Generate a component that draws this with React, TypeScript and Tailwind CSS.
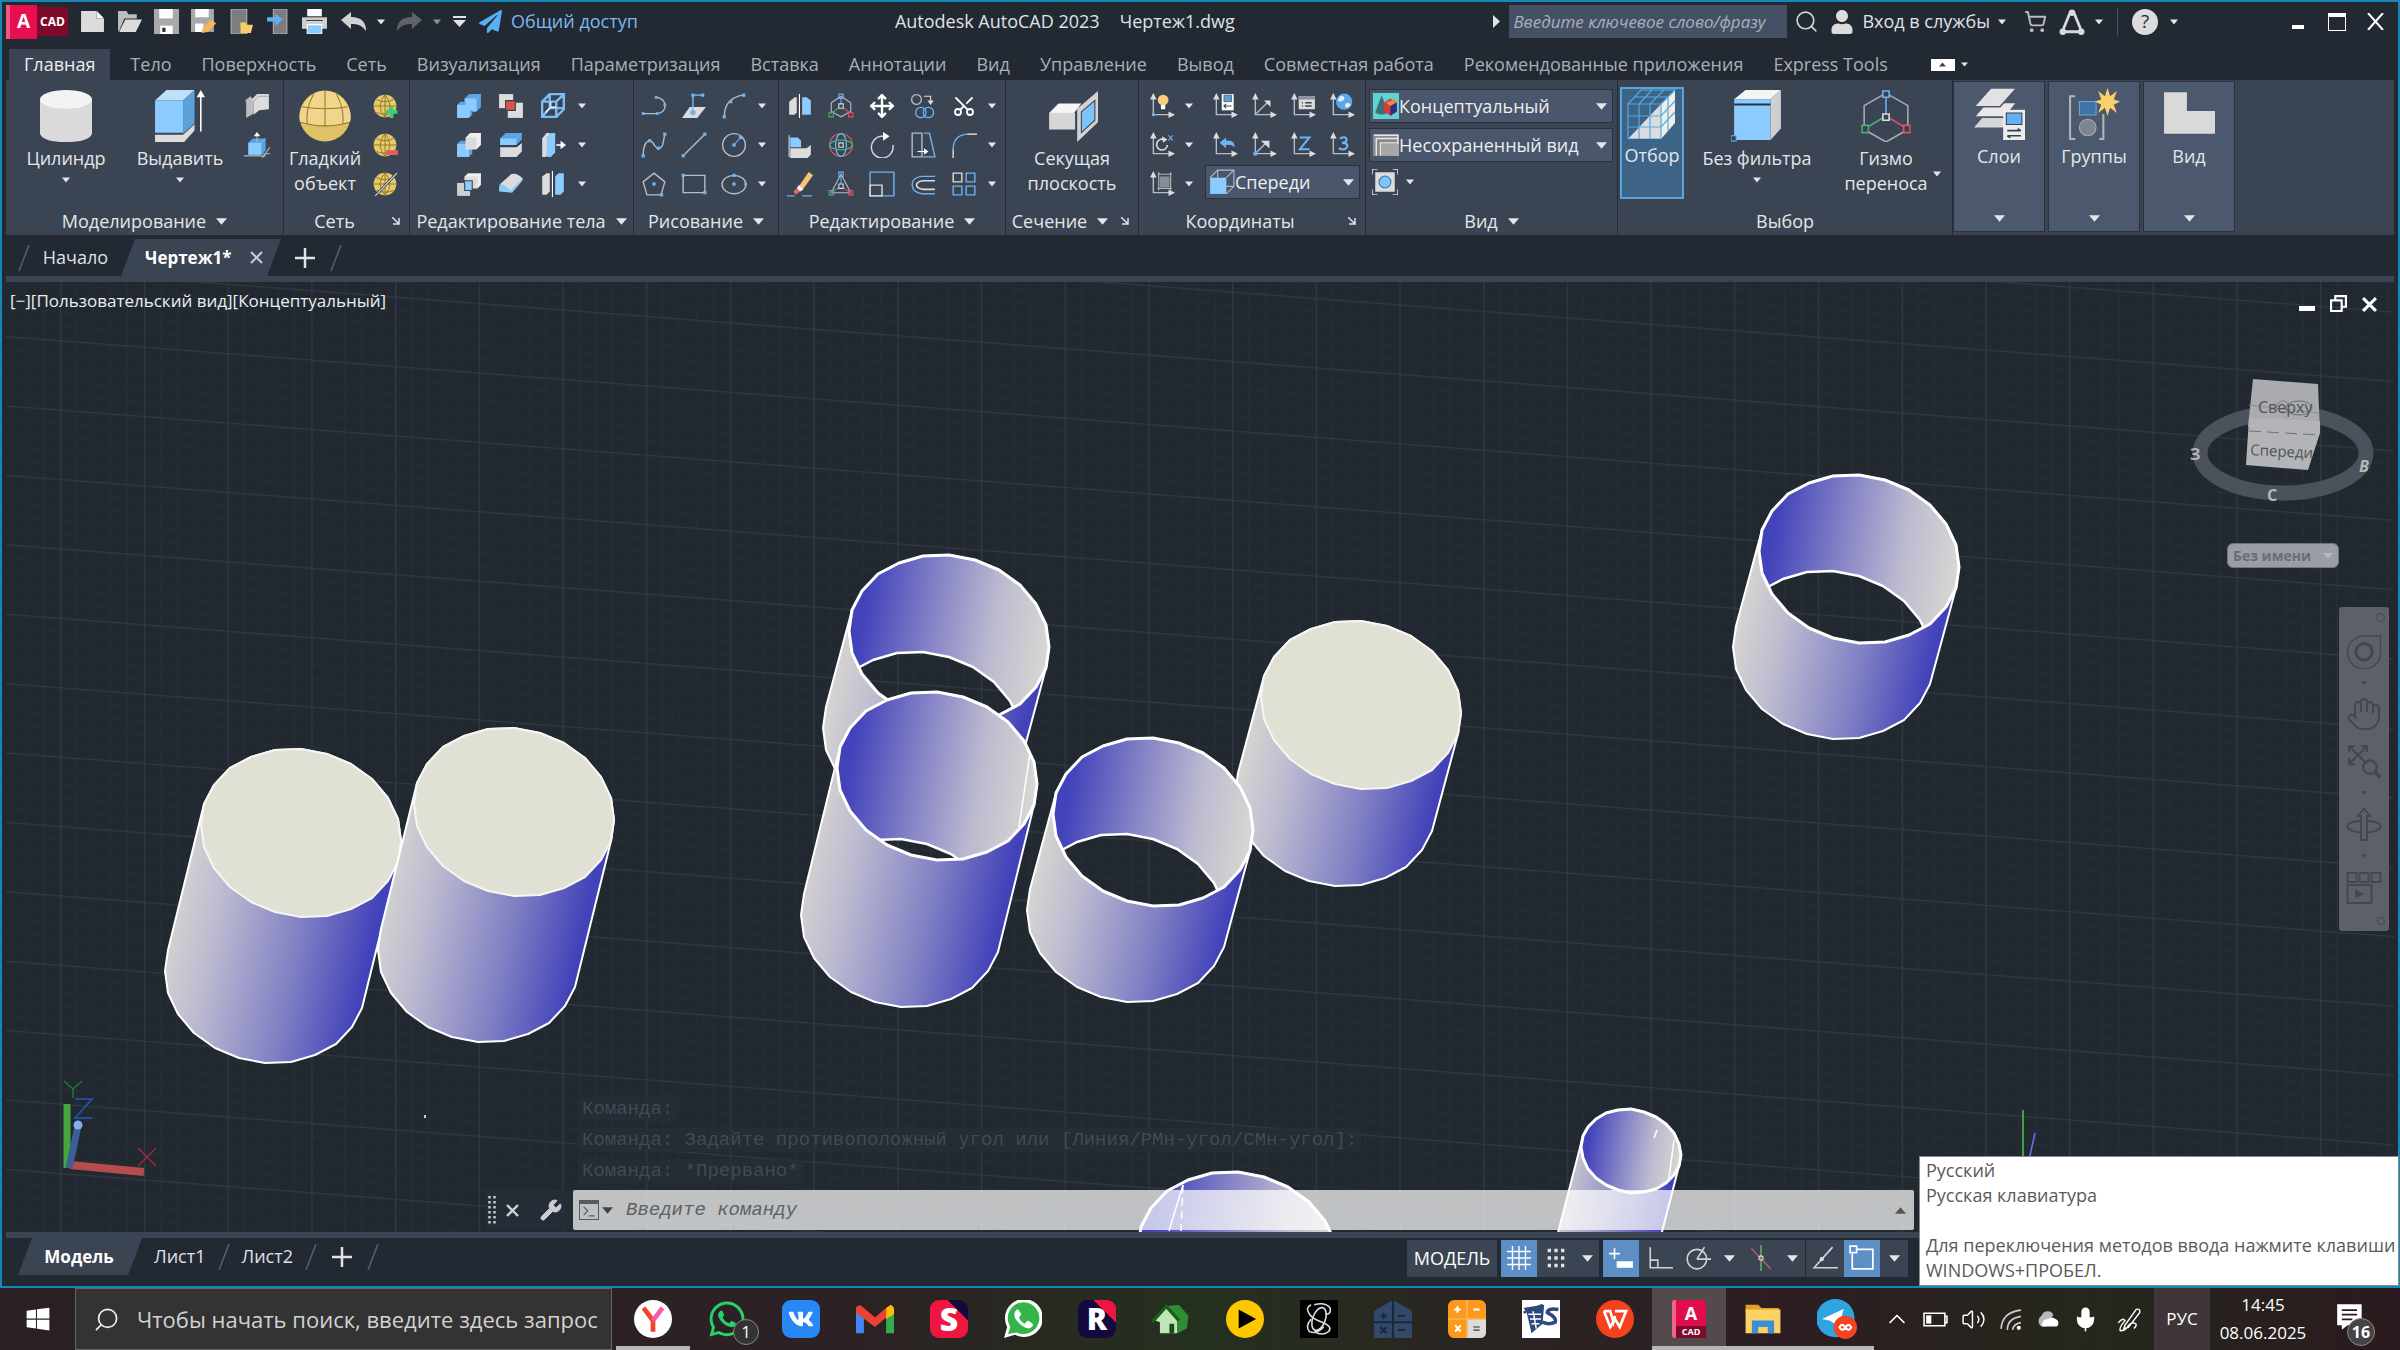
import type { ReactNode } from "react";
import { useState } from "react";
import {
  Search, Move, Scissors, Wrench, ShoppingCart, Mic, ChevronUp, Hand, Terminal, Volume2,
} from "lucide-react";
import { FaWhatsapp, FaVk, FaUser, FaPaperPlane, FaWindows } from "react-icons/fa";

const LIGHT = "#dcdcdc";
const BLUE = "#8ccbff";
const LINE = "#b4bcc8";

/* ── Small shared pieces ─────────────────────────────────────────────── */
function Svg({ size = 26, box = 24, children }: { size?: number; box?: number; children: ReactNode }) {
  return (
    <svg width={size} height={size} viewBox={`0 0 ${box} ${box}`} fill="none" className="shrink-0" aria-hidden="true">
      {children}
    </svg>
  );
}

function Caret({ w = 8, up = false, fill = "#e4e6e9" }: { w?: number; up?: boolean; fill?: string }) {
  return (
    <svg width={w} height={w} viewBox="0 0 10 10" className="shrink-0" aria-hidden="true">
      <path d={up ? "M0 8L5 2L10 8Z" : "M0 2H10L5 8Z"} fill={fill} />
    </svg>
  );
}

function Nodes({ at, s = 2.6, fill = "#6db3f2" }: { at: number[][]; s?: number; fill?: string }) {
  return (
    <>
      {at.map(([x, y], i) => (
        <rect key={i} x={x - s / 2} y={y - s / 2} width={s} height={s} fill={fill} />
      ))}
    </>
  );
}

function Axes() {
  return (
    <>
      <path d="M4 4V20H20" stroke={LINE} strokeWidth="1.3" />
      <path d="M1 6L4 0L7 6ZM18 17L24 20L18 23Z" fill={LIGHT} />
    </>
  );
}

/* a solid block with a lighter top and side */
function Block({ x, y, w, h, front = BLUE, side = "#5aa3e0", d = 5 }: {
  x: number; y: number; w: number; h: number; front?: string; side?: string; d?: number;
}) {
  return (
    <>
      <path d={`M${x} ${y}l${d} ${-d}h${w}v${h}l${-d} ${d}h${-w}z`} fill={side} />
      <path d={`M${x} ${y}h${w}v${h}h${-w}z`} fill={front} />
      <path d={`M${x + w} ${y}l${d} ${-d}`} stroke="#fff" strokeOpacity=".4" strokeWidth=".6" />
    </>
  );
}

function Ball({ children }: { children?: ReactNode }) {
  return (
    <Svg>
      <circle cx="12" cy="12" r="10.5" fill="#e6c96a" />
      <path d="M12 1.500V22.500M1.500 12H22.500M4 6Q12 10 20 6M4 18Q12 21 20 18M12 1.500Q3 12 12 22.500M12 1.500Q21 12 12 22.500" stroke="#8a7026" strokeWidth=".8" />
      {children}
    </Svg>
  );
}

const icons: Record<string, ReactNode> = {
  polysolid: <Svg><path d="M1 7L6 3L9 7V19L2 23V8Z" fill="#bdbdbd" /><path d="M7 6L12 1H23V15L14 16L9 20V8Z" fill={LIGHT} /><path d="M9 8L13 3H23" stroke="#a0a0a0" strokeWidth=".8" /></Svg>,
  presspull: <Svg><Block x={4} y={10} w={12} h={11} d={4} /><path d="M12 10V3M0 22H20M17 24L24 14M17 20L24 20" stroke="#aeb7c3" /><path d="M9 4L12 0L15 4Z" fill="#fff" /></Svg>,
  meshPlus: <Ball><path d="M18 12V23M12.500 17.500H23.500" stroke="#3fce77" strokeWidth="3.500" /></Ball>,
  meshMinus: <Ball><path d="M13 19H24" stroke="#e35d5d" strokeWidth="4.500" /></Ball>,
  meshCrease: <Ball><path d="M3 23L23 2" stroke="#39414e" strokeWidth="2.500" /><path d="M3 23L23 2" stroke={LIGHT} /></Ball>,
  union: <Svg><Block x={8} y={5} w={11} h={12} d={4} /><Block x={1} y={11} w={11} h={12} d={3} /><path d="M9 6H18V16H13V22H9Z" fill={BLUE} /></Svg>,
  interfere: <Svg><path d="M1 1H14V14H1Z" fill={LIGHT} /><path d="M9 9H23V23H9Z" fill={LIGHT} /><path d="M7 7H16V16H7Z" fill="#d9534f" stroke="#39414e" /></Svg>,
  edges: <Svg><path d="M2 8H15V22H2ZM2 8L9 1H22V15L15 22M22 1L15 8M9 1V14L2 22M9 14H22" stroke="#7cbdf5" strokeWidth="2.200" /><path d="M5 18L10 13M10 13V8M10 13H15" stroke="#fff" /></Svg>,
  subtract: <Svg><Block x={1} y={11} w={11} h={12} d={3} /><Block x={9} y={5} w={10} h={11} front={LIGHT} side="#efefef" d={4} /></Svg>,
  slice: <Svg><Block x={2} y={6} w={15} h={6} d={5} /><path d="M2 14H17L22 10V18L17 23H2Z" fill={LIGHT} /><path d="M2 13H17L23 8" stroke="#39414e" strokeWidth="1.500" /></Svg>,
  thicken: <Svg><path d="M2 6L6 1H9V19L5 23H2Z" fill={LIGHT} /><path d="M6 5L10 1H14V19L10 23H6Z" fill={BLUE} /><path d="M15 12H21" stroke="#fff" strokeWidth="1.500" /><path d="M19 8L24 12L19 16Z" fill="#fff" /></Svg>,
  intersect: <Svg><Block x={8} y={5} w={12} h={11} front={LIGHT} side="#efefef" d={3} /><path d="M1 11H13V23H1Z" fill="#d0d0d0" /><path d="M8 9H15V18H8Z" fill={BLUE} stroke="#39414e" /></Svg>,
  fillet3d: <Svg><path d="M1 14L13 3L23 8L20 12L13 20L1 19Z" fill={BLUE} /><path d="M1 13L12 3Q17 1 23 7L11 18Q6 11 1 13Z" fill={LIGHT} /></Svg>,
  mirrorSolid: <Svg><path d="M2 5L6 2H9V19L6 22H2Z" fill={LIGHT} /><path d="M14 5L17 2H22V19L19 22H14Z" fill={BLUE} /><path d="M11.500 0V24" stroke="#fff" /></Svg>,
  polyline: <Svg><path d="M2 19H15Q23 18 22 10Q21 5 14 4" stroke={LINE} strokeWidth="1.300" /><Nodes at={[[2, 19], [15, 19], [14, 4], [22, 11]]} /></Svg>,
  plane: <Svg><path d="M1 23L8 13H23L15 23Z" fill={LIGHT} /><path d="M11 18V2H20" stroke="#7cbdf5" strokeWidth="1.300" /><circle cx="11" cy="18" r="2.500" fill="#6db3f2" /><Nodes at={[[11, 2], [20, 2]]} s={3} /></Svg>,
  arc: <Svg><path d="M3 22Q3 5 20 2" stroke={LINE} strokeWidth="1.300" /><Nodes at={[[3, 22], [9, 8], [21, 2]]} s={3} /></Svg>,
  spline: <Svg><path d="M2 22Q2 9 8 8Q11 9 13 13Q17 18 20 12L22 2" stroke={LINE} strokeWidth="1.300" /><Nodes at={[[2, 22], [8, 8], [16, 15], [22, 2]]} s={3} /></Svg>,
  line: <Svg><path d="M2 22L22 2" stroke={LINE} strokeWidth="1.300" /><Nodes at={[[2, 22], [22, 2]]} s={3} /></Svg>,
  circle: <Svg><circle cx="12" cy="12" r="10.500" stroke={LINE} strokeWidth="1.300" /><path d="M12 12L18 5" stroke="#6db3f2" /><Nodes at={[[12, 12], [18, 5]]} s={3} /></Svg>,
  polygon: <Svg><path d="M12 2L22 10L18.500 22H5.500L2 10Z" stroke={LINE} strokeWidth="1.300" /><Nodes at={[[12, 12], [19, 22]]} s={3} /></Svg>,
  rect: <Svg><path d="M2 4H22V20H2Z" stroke={LINE} strokeWidth="1.300" /><Nodes at={[[2, 4], [22, 20]]} s={3} /></Svg>,
  ellipse: <Svg><ellipse cx="12" cy="12.500" rx="11" ry="8.500" stroke={LINE} strokeWidth="1.300" /><Nodes at={[[12, 4], [12, 12], [23, 12]]} s={3} /></Svg>,
  mirror3d: <Svg><path d="M2 8L7 4H9V18L7 20H2Z" fill={LIGHT} /><path d="M14 4H18L22 7V20H14Z" fill={BLUE} /><path d="M11.500 1V23" stroke="#fff" /></Svg>,
  gizmoMove: <Svg><path d="M12 3L21 9V17L12 22L3 17V9Z" stroke={LINE} /><path d="M12 3V12" stroke="#6db3f2" /><path d="M12 12L3 19" stroke="#4fae72" /><path d="M12 12L21 19" stroke="#c9566b" /><path d="M10 1H14V5H10Z" stroke="#6db3f2" /><path d="M1 18H5V22H1Z" stroke="#4fae72" /><path d="M19 18H23V22H19Z" stroke="#e0526a" /><path d="M10 10H14V14H10Z" stroke="#ddd" fill="#39414e" /></Svg>,
  move: <Move size={26} color="#fff" strokeWidth={2.2} />,
  copy: <Svg><circle cx="6" cy="6" r="4.500" stroke={LINE} strokeWidth="1.200" /><circle cx="10" cy="18" r="4.800" stroke="#6db3f2" strokeWidth="1.200" /><circle cx="17" cy="18" r="4.800" stroke="#6db3f2" strokeWidth="1.200" /><path d="M13 3H19V8" stroke="#ddd" /><path d="M16 7H22L19 11Z" fill="#ddd" /></Svg>,
  trim: <span className="relative flex"><Scissors size={24} color="#fff" strokeWidth={1.800} className="-rotate-90" /></span>,
  align: <Svg><path d="M2 3V23" stroke={LINE} strokeWidth="1.300" /><path d="M3 5H10L13 8V14H3Z" fill={BLUE} /><path d="M3 15H18L22 12V21L19 24H3Z" fill={LIGHT} /></Svg>,
  gizmoRotate: <Svg><circle cx="12" cy="12" r="10.500" stroke="#c9566b" strokeWidth="1.200" /><ellipse cx="12" cy="12" rx="5" ry="10.500" stroke="#6db3f2" strokeWidth="1.200" /><ellipse cx="12" cy="12" rx="10.500" ry="4.500" stroke="#4fae72" strokeWidth="1.200" /><path d="M10 10H14V14H10Z" stroke="#ddd" /></Svg>,
  rotate: <Svg><path d="M22 12A10 10 0 1 1 12 4H15" stroke="#d2d6dc" strokeWidth="1.400" /><path d="M13 0L19 4L13 8Z" fill="#fff" /></Svg>,
  stretch: <Svg><path d="M2 1H11V23H2Z" stroke={LINE} strokeWidth="1.300" /><path d="M13 1H18L23 23H12" stroke="#6db3f2" strokeWidth="1.300" /><path d="M7 18H14" stroke="#fff" /><path d="M13 15L17 18L13 21Z" fill="#fff" /></Svg>,
  fillet: <Svg><path d="M2 24V16" stroke="#ddd" strokeWidth="1.300" /><path d="M2 16Q2 3 15 2" stroke="#6db3f2" strokeWidth="1.300" /><path d="M15 2H24" stroke="#ddd" strokeWidth="1.300" /></Svg>,
  erase: <Svg><path d="M11 14L20 1L24 4L14 18Z" fill="#f7c672" /><path d="M9 16L11 13L15 17L12 19Z" fill="#fff" /><path d="M6 19L9 16L12 19L8 22Z" fill="#f0645f" /><path d="M0 23H7M14 23H23" stroke="#6db3f2" strokeWidth="1.300" /></Svg>,
  gizmoScale: <Svg><path d="M12 3L3 20H21Z" stroke={LINE} /><path d="M12 3V14" stroke="#6db3f2" /><path d="M12 14L3 20" stroke="#4fae72" /><path d="M12 14L21 20" stroke="#c9566b" /><path d="M10 1H14V5H10Z" stroke="#6db3f2" /><path d="M1 18H5V22H1Z" stroke="#4fae72" /><path d="M19 18H23V22H19Z" stroke="#e0526a" /><path d="M10 12H14V16H10Z" stroke="#ddd" fill="#39414e" /></Svg>,
  scale: <Svg><path d="M1 1H23V23H1Z" stroke="#6db3f2" strokeWidth="1.300" /><path d="M1 13H12V23H1Z" stroke="#ddd" strokeWidth="1.300" /></Svg>,
  offset: <Svg><path d="M23 5H11Q2 6 2 12.500Q2 20 11 21H23" stroke="#6db3f2" strokeWidth="1.300" /><path d="M23 9H12Q6 10 6 13Q6 16 12 17H23" stroke="#ddd" strokeWidth="1.500" /></Svg>,
  array: <Svg><path d="M2 2H10V10H2Z" stroke="#ddd" strokeWidth="1.300" /><path d="M14 2H22V10H14ZM2 14H10V22H2ZM14 14H22V22H14Z" stroke="#6db3f2" strokeWidth="1.300" /></Svg>,
  ucsIcon: <Svg><Axes /><circle cx="13" cy="6.500" r="5" fill="#f8ce7c" /><path d="M11 11H15V15H11Z" fill="#fff" /><circle cx="4" cy="20" r="1.500" fill="#6db3f2" /></Svg>,
  ucsX: <Svg><Axes /><path d="M14 7A5 5 0 1 0 17 12" stroke="#ddd" strokeWidth="1.500" /><path d="M12 4L17 7L13 10Z" fill="#ddd" /><path d="M18 3L22 8M22 3L18 8" stroke="#6db3f2" /></Svg>,
  ucsObject: <Svg><Axes /><path d="M10 5H19V15H10Z" fill="#858d98" /><path d="M8 3H21M8 16H21M9 1V18M20 1V18" stroke="#b8b8b8" /></Svg>,
  ucsNamed: <Svg><Axes /><path d="M9 1H20V16H9Z" fill="#fff" /><path d="M11 2H18V8H11Z" fill="#5d9fdc" stroke="#39414e" strokeWidth=".6" /><path d="M11 12H18M13 10L11 12L13 14" stroke="#39414e" /></Svg>,
  ucsWorldAxis: <Svg><Axes /><path d="M5 19L15 9" stroke={LINE} strokeWidth="1.300" /><path d="M12 7H18V13Z" fill={LIGHT} /></Svg>,
  ucsList: <Svg><Axes /><path d="M8 3H23V15H8Z" fill={LIGHT} /><path d="M8 3H23V6H8Z" fill="#8a939f" /><path d="M11 9H12M14 9H20M11 12H12M14 12H20" stroke="#39414e" strokeWidth="1.500" /></Svg>,
  ucsGlobe: <Svg><Axes /><circle cx="14" cy="8" r="7.500" fill="#5aa8ea" /><path d="M10 3Q15 2 14 6Q11 9 8 7ZM15 10Q19 8 20 11Q17 15 15 13Z" fill="#dcefff" /></Svg>,
  ucsPrev: <Svg><Axes /><path d="M7 10L13 5V8Q21 7 21 14Q17 11 13 12V15Z" fill="#6db3f2" /></Svg>,
  ucsOrigin: <Svg><Axes /><path d="M5 19L14 10" stroke={LINE} strokeWidth="1.300" /><path d="M9 8L17 8V15Z" fill={LIGHT} /><circle cx="4" cy="20" r="2" fill="#6db3f2" /></Svg>,
  ucsZ: <Svg><Axes /><path d="M9 5H18L9 16H18" stroke="#6db3f2" strokeWidth="1.800" /></Svg>,
  ucs3: <Svg><Axes /><path d="M10 6Q17 3 16 8Q15 10 12 10Q17 10 17 13Q15 18 9 15" stroke="#6db3f2" strokeWidth="2" /></Svg>,
  frontCube: <Svg><path d="M1 8L8 1H23V16L16 23M8 1V16L1 23M8 16H23" stroke={LINE} /><path d="M23 1L16 8" stroke={LINE} /><path d="M1 8H16V23H1Z" fill={BLUE} /></Svg>,
  conceptual: <Svg><path d="M0 0H24V24H0Z" fill="#5fd3cf" /><path d="M8 2L14 18Q8 22 2 18Z" fill="#3c6f7a" /><path d="M10 9L16 5L22 9V17L16 21L10 17Z" fill="#d63c3c" /><path d="M16 12L22 9V17L16 21Z" fill="#2a2f80" /><path d="M16 12L22 8L20 6L12 9Z" fill="#f08a3c" /></Svg>,
  viewFrame: <Svg><path d="M0 2H24V22H0Z" fill="#8a8a8a" /><path d="M1 3H23V22M3 22V6H23M7 22V10H23" stroke="#e8e8e8" strokeWidth="1.300" /><path d="M8 11H24V22H8Z" fill="#a7a7a7" /></Svg>,
  viewport: <Svg><path d="M3 3H21V21H3Z" fill={LIGHT} /><path d="M0 5V0H5M19 0H24V5M24 19V24H19M5 24H0V19" stroke={LIGHT} strokeWidth="1.500" /><circle cx="12" cy="12" r="5.500" fill="#7ec4f5" stroke="#3a78a8" /></Svg>,
};

const big: Record<string, ReactNode> = {
  cylinder: <Svg size={52} box={50}><path d="M0 9V42Q3 50 25 50Q47 50 50 42V9Z" fill="#dadada" /><ellipse cx="25" cy="9" rx="25" ry="9" fill="#f3f3f3" /></Svg>,
  extrude: <Svg size={52} box={50}><path d="M1 10L12 0H39L28 10Z" fill="#bfe0fb" /><path d="M1 10H28V41H1Z" fill={BLUE} /><path d="M28 10L39 0V32L28 42Z" fill="#5ca2d8" /><path d="M1 43H28L39 33V39L29 50H1Z" fill={LIGHT} /><path d="M45 40V4" stroke="#fff" strokeWidth="1.500" /><path d="M41 7L45 0L49 7Z" fill="#fff" /></Svg>,
  smooth: <Svg size={52} box={50}><circle cx="25" cy="25" r="24.500" fill="#e0c165" /><path d="M25 1Q40 1 48 17Q51 25 49 31Q26 38 1 31Q-1 22 4 14Q12 1 25 1Z" fill="#f0d58a" /><path d="M25 1V35M14 4Q6 18 8 33M36 4Q44 18 42 33M3 16Q25 20 47 16M1 31Q26 38 49 31" stroke="#927a32" /></Svg>,
  section: <Svg size={52} box={50}><path d="M3 22L12 13H34L27 22Z" fill="#f5f5f5" /><path d="M3 22H28V38H3Z" fill="#d6d6d6" /><path d="M30 18L50 1V31L30 50Z" fill="#d2d2d2" /><path d="M34 21L47 10V29L34 41Z" fill="#7ec4fa" stroke="#39414e" /></Svg>,
  select: <Svg size={50} box={50}><path d="M1 50L34 15V50Z" fill={LIGHT} /><path d="M34 15L48 1V34L34 50Z" fill="#efefe6" /><path d="M1 15H34V50H1ZM1 15L14 1H48L34 15M12 15V50M23 15V50M1 27H34L48 12M1 38H34L48 23M7 8H41M25 1L12 15M37 1L23 15M41 8V42" stroke="#55a8e6" strokeWidth="1.200" /></Svg>,
  noFilter: <Svg size={52} box={50}><path d="M3 9L14 0H48L38 9Z" fill="#f4f4f4" /><path d="M38 9L48 0V37L38 48Z" fill="#cfcfcf" /><path d="M3 9H38V48H3Z" fill={BLUE} /><path d="M3 14H38" stroke="#243447" strokeWidth="2" /><path d="M0 44H5V49H0Z" fill="#39414e" stroke="#6db3f2" /></Svg>,
  gizmo: <Svg size={52} box={50}><path d="M25 3L46 15V38L25 50L4 38V15Z" stroke="#a6adb7" strokeWidth="1.500" /><path d="M25 3V25" stroke="#6db3f2" strokeWidth="1.500" /><path d="M25 25L5 37" stroke="#4fae72" strokeWidth="1.500" /><path d="M25 25L45 37" stroke="#c9566b" strokeWidth="1.500" /><path d="M22 1H28V7H22Z" stroke="#6db3f2" fill="#39414e" strokeWidth="1.500" /><path d="M2 34H8V41H2Z" stroke="#4fae72" fill="#39414e" strokeWidth="1.500" /><path d="M42 34H48V41H42Z" stroke="#e0526a" fill="#39414e" strokeWidth="1.500" /><path d="M22 23H28V29H22Z" stroke="#ddd" fill="#39414e" strokeWidth="1.500" /></Svg>,
  layers: <Svg size={52} box={50}><path d="M1 38L13 24H42L31 38Z" fill="#d6d6d6" /><path d="M1 28L13 14H42L31 28Z" fill="#e8e8e8" stroke="#4c5a70" strokeWidth="1.500" /><path d="M1 18L17 0H42L26 18Z" fill="#e2e2e2" stroke="#4c5a70" strokeWidth="1.500" /><path d="M29 21H50V50H29Z" fill="#ececec" /><path d="M32 24H47V35H32Z" fill="#62b0f0" stroke="#39414e" /><path d="M33 41H46M43 39L46 41M33 46H46M36 48L33 46" stroke="#39414e" strokeWidth="1.500" /></Svg>,
  groups: <Svg size={52} box={50}><path d="M7 8H2V49H7M30 49H34V25" stroke="#b0b5bd" strokeWidth="2" /><path d="M11 13H27V26H11Z" fill="#3f74a8" stroke="#69a7dd" /><circle cx="19" cy="38" r="8" fill="#7d8592" stroke="#a7adb6" /><path d="M38 0L40.500 8L47 3L44 11L50 13L44 16L47 24L40.500 19L38 27L35.500 19L29 24L32 16L26 13L32 11L29 3L35.500 8Z" fill="#fccf6d" /></Svg>,
  view: <Svg size={52} box={50}><path d="M1 4H23V22H50V44H1Z" fill="#d9d9d9" /></Svg>,
};

/* ── Title bar ───────────────────────────────────────────────────────── */
const quick: [string, ReactNode][] = [
  ["Создать", <Svg size={25}><path d="M1 2H16L23 9V22H1Z" fill={LIGHT} /><path d="M16 2V9H23" fill="#fff" stroke="#8a8a8a" strokeWidth=".6" /></Svg>],
  ["Открыть", <Svg size={25}><path d="M1 2H9L11 5H19V9H7L2 21H1Z" fill="#bdbdbd" /><path d="M8 10H24L18 22H2Z" fill={LIGHT} /></Svg>],
  ["Сохранить", <Svg size={25}><path d="M0 0H24V24H0Z" fill="#a9a9a9" /><path d="M5 0H18V9H5Z" fill="#fff" /><path d="M6 16H18V24H6Z" fill="#fff" /><path d="M8 18H11V22H8Z" fill="#232a33" /></Svg>],
  ["Сохранить как", <Svg size={25}><path d="M0 0H22V22H0Z" fill="#a9a9a9" /><path d="M4 0H17V8H4ZM4 14H12V22H4Z" fill="#fff" /><path d="M10 23L12 17L20 10L24 14L16 22Z" fill="#f2b75d" /></Svg>],
  ["Открыть из Web", <Svg size={25}><path d="M3 0H18V24H3Z" fill="#7d7d7d" stroke="#b5b5b5" /><path d="M12 13H17L18 15H24L22 23H12Z" fill="#f5cf6a" /></Svg>],
  ["Сохранить в Web", <Svg size={25}><path d="M8 0H21V24H8Z" fill="#7d7d7d" stroke="#b5b5b5" /><path d="M2 8H10V4L17 10L10 16V12H2Z" fill="#5fb2f5" /></Svg>],
  ["Печать", <Svg size={25}><path d="M5 0H19V7H5Z" fill="#fff" /><path d="M0 8H24V19H0Z" fill="#cfcfcf" /><path d="M4 11H20" stroke="#444" /><path d="M5 15H19V24H5Z" fill={BLUE} stroke="#fff" /></Svg>],
];

function UndoArrow({ fill, flip = false }: { fill: string; flip?: boolean }) {
  return (
    <svg width="26" height="22" viewBox="0 0 26 22" className={flip ? "-scale-x-100" : ""} aria-hidden="true">
      <path d="M0 9L10 1V6Q25 6 25 20Q20 12 10 13V18Z" fill={fill} />
    </svg>
  );
}

function TitleBar() {
  return (
    <header className="flex h-[47px] items-center pb-[10px] pt-[2px] text-[18px] text-[#dfe2e6]">
      <div className="flex h-[34px] w-[62px] shrink-0 items-center text-white">
        <div className="flex h-[34px] w-[31px] items-center justify-center border-l-[4px] border-[#f2557f] bg-[#e6104f] text-[19px] font-bold">A</div>
        <div className="flex h-[29px] w-[31px] items-center justify-center rounded-r bg-[#7d0a2b] text-[12px] font-bold">CAD</div>
      </div>
      <div className="ml-[6px] flex items-center">
        {quick.map(([label, icon]) => (
          <button key={label} aria-label={label} className="flex w-[37px] justify-center">{icon}</button>
        ))}
        <button aria-label="Отменить" className="ml-[4px] flex w-[34px] justify-center"><UndoArrow fill="#d2d2d2" /></button>
        <button aria-label="Список отмены" className="flex w-[20px] justify-center"><Caret /></button>
        <button aria-label="Повторить" className="flex w-[36px] justify-center"><UndoArrow fill="#5e6369" flip /></button>
        <button aria-label="Список повтора" className="flex w-[20px] justify-center"><Caret fill="#8b9097" /></button>
        <button aria-label="Настройка панели" className="flex w-[24px] justify-center">
          <svg width="13" height="12" viewBox="0 0 13 12" aria-hidden="true"><path d="M0 0H13V2H0ZM0 4H13L6.500 11Z" fill="#dfe2e6" /></svg>
        </button>
        <button className="ml-[8px] flex items-center gap-[9px] whitespace-nowrap text-[#7db8ee]">
          <FaPaperPlane size={23} color="#5aaef2" />Общий доступ
        </button>
      </div>
      <h1 className="ml-[257px] flex gap-[20px] whitespace-nowrap font-normal"><span>Autodesk AutoCAD 2023</span><span>Чертеж1.dwg</span></h1>
      <div className="ml-auto flex items-center">
        <svg width="7" height="13" viewBox="0 0 7 13" className="mr-[9px]" aria-hidden="true"><path d="M0 0L7 6.500L0 13Z" fill="#dfe2e6" /></svg>
        <input aria-label="Поиск" placeholder="Введите ключевое слово/фразу" className="h-[33px] w-[278px] bg-[#465064] px-[4px] text-[17px] italic placeholder:text-[#a9b0bb]" />
        <button aria-label="Найти" className="flex w-[38px] justify-center"><Search size={25} color="#cfd3d8" strokeWidth={1.600} /></button>
        <button className="flex items-center gap-[8px] whitespace-nowrap pl-[5px]"><FaUser size={24} color="#dcdcdc" />Вход в службы<Caret /></button>
        <button aria-label="Autodesk App Store" className="ml-[18px]"><ShoppingCart size={23} color="#b9bdc3" /></button>
        <button aria-label="Сервисы" className="ml-[12px] flex items-center gap-[10px]">
          <Svg size={26}><path d="M10 4H14L21 21H3Z" stroke="#d6d9dd" strokeWidth="2.600" /><circle cx="12" cy="3.500" r="3" fill="#d6d9dd" /><circle cx="3.500" cy="21" r="3" fill="#d6d9dd" /><circle cx="20.500" cy="21" r="3" fill="#d6d9dd" /></Svg>
          <Caret />
        </button>
        <span className="ml-[14px] h-[28px] w-px bg-[#4a525e]" />
        <button aria-label="Справка" className="ml-[14px] flex items-center gap-[12px]">
          <span className="flex h-[26px] w-[26px] items-center justify-center rounded-full bg-[#dcdcdc] text-[19px] text-[#232a33]">?</span>
          <Caret />
        </button>
        <button aria-label="Свернуть" className="ml-[100px] flex w-[40px] justify-center"><span className="mt-[10px] h-[4px] w-[12px] bg-white" /></button>
        <button aria-label="Развернуть" className="flex w-[38px] justify-center"><span className="h-[18px] w-[18px] border border-t-[4px] border-white" /></button>
        <button aria-label="Закрыть" className="flex w-[38px] justify-center">
          <svg width="17" height="17" viewBox="0 0 17 17" aria-hidden="true"><path d="M1 0L16 17M16 0L1 17" stroke="#fff" strokeWidth="2" /></svg>
        </button>
      </div>
    </header>
  );
}

/* ── Ribbon ──────────────────────────────────────────────────────────── */
const tabs = [
  "Главная", "Тело", "Поверхность", "Сеть", "Визуализация", "Параметризация", "Вставка", "Аннотации", "Вид",
  "Управление", "Вывод", "Совместная работа", "Рекомендованные приложения", "Express Tools",
];

function RibbonTabs() {
  const [active, setActive] = useState("Главная");
  return (
    <nav className="flex h-[31px] items-stretch pl-[3px] text-[18px]">
      {tabs.map(t => (
        <button
          key={t}
          onClick={() => setActive(t)}
          className={t === active
            ? "mr-[5px] whitespace-nowrap bg-[#3b4452] px-[15px] text-[#eceef0]"
            : "whitespace-nowrap px-[15px] text-[#a9afb8]"}
        >
          {t}
        </button>
      ))}
      <button aria-label="Свернуть ленту" className="ml-[28px] flex items-center gap-[6px]">
        <span className="flex h-[12px] w-[24px] items-center justify-center bg-white"><Caret up fill="#39414e" w={7} /></span>
        <Caret w={7} />
      </button>
    </nav>
  );
}

function Panel({ title, width, arrow, launcher, children }: {
  title: string; width: string; arrow?: boolean; launcher?: boolean; children: ReactNode;
}) {
  return (
    <section className={`${width} flex shrink-0 flex-col border-r border-[#262d37]`}>
      <div className="flex h-[128px]">{children}</div>
      <div className={`relative flex h-[26px] items-center justify-center gap-[10px] whitespace-nowrap ${launcher ? "pr-[24px]" : ""}`}>
        {title}
        {arrow && <Caret w={11} />}
        {launcher && (
          <svg width="8" height="8" viewBox="0 0 8 8" className="absolute right-[9px]" aria-hidden="true"><path d="M0 0L7 7M7 1V7H1" stroke="#dfe2e6" strokeWidth="1.500" fill="none" /></svg>
        )}
      </div>
    </section>
  );
}

function BigButton({ icon, lines, width, arrow, active }: {
  icon: string; lines: string[]; width: string; arrow?: boolean; active?: boolean;
}) {
  return (
    <button className={`${width} flex flex-col items-center ${active ? "my-[7px] h-[112px] border-2 border-[#5aa3dc] bg-[#3d6487]" : "pt-[10px]"}`}>
      {big[icon]}
      <span className="mt-[4px] block whitespace-nowrap leading-[25px]">
        {lines.map(l => <span key={l} className="block">{l}</span>)}
      </span>
      {arrow && <span className="mt-[5px]"><Caret /></span>}
    </button>
  );
}

function IconRows({ rows, cell, className = "" }: { rows: string[][]; cell: string; className?: string }) {
  return (
    <div className={`flex flex-col pt-[6px] ${className}`}>
      {rows.map((row, i) => (
        <div key={i} className="flex h-[39px] items-center">
          {row.map((name, j) => name === "arrow"
            ? <button key={j} aria-label="Ещё" className="flex w-[16px] justify-center"><Caret /></button>
            : <button key={j} aria-label={name} className={`${cell} flex justify-center`}>{icons[name]}</button>)}
        </div>
      ))}
    </div>
  );
}

function Combo({ icon, label, options, width }: { icon: string; label: string; options: string[]; width: string }) {
  return (
    <div className={`${width} relative flex h-[34px] items-center border border-[#2b323d] bg-[#4a566b]`}>
      <span className="pl-[3px]">{icons[icon]}</span>
      <select aria-label={label} className="h-full min-w-0 flex-1 appearance-none bg-transparent text-[18px] text-[#eceef0]">
        {options.map(o => <option key={o}>{o}</option>)}
      </select>
      <span className="pointer-events-none absolute right-[5px]"><Caret w={11} /></span>
    </div>
  );
}

function Collapsed({ icon, title }: { icon: string; title: string }) {
  return (
    <button className="mr-[3px] flex h-[151px] w-[92px] shrink-0 flex-col items-center border border-[#2b323d] bg-[#4c586d] pb-[7px] pt-[6px]">
      {big[icon]}
      <span className="mt-[4px] leading-[25px]">{title}</span>
      <span className="mt-auto"><Caret w={11} /></span>
    </button>
  );
}

function Ribbon() {
  return (
    <div className="flex h-[155px] overflow-hidden bg-[#3b4452] text-[18px] text-[#e4e6e9]">
      <Panel title="Моделирование" width="w-[278px]" arrow>
        <BigButton icon="cylinder" lines={["Цилиндр"]} width="w-[120px]" arrow />
        <BigButton icon="extrude" lines={["Выдавить"]} width="w-[108px]" arrow />
        <IconRows rows={[["polysolid"], ["presspull"]]} cell="w-[46px]" />
      </Panel>
      <Panel title="Сеть" width="w-[126px]" launcher>
        <BigButton icon="smooth" lines={["Гладкий", "объект"]} width="w-[82px]" />
        <IconRows rows={[["meshPlus"], ["meshMinus"], ["meshCrease"]]} cell="w-[38px]" />
      </Panel>
      <Panel title="Редактирование тела" width="w-[224px]" arrow>
        <IconRows
          className="pl-[38px]"
          cell="w-[42px]"
          rows={[["union", "interfere", "edges", "arrow"], ["subtract", "slice", "thicken", "arrow"], ["intersect", "fillet3d", "mirrorSolid", "arrow"]]}
        />
      </Panel>
      <Panel title="Рисование" width="w-[145px]" arrow>
        <IconRows
          cell="w-[40px]"
          rows={[["polyline", "plane", "arc", "arrow"], ["spline", "line", "circle", "arrow"], ["polygon", "rect", "ellipse", "arrow"]]}
        />
      </Panel>
      <Panel title="Редактирование" width="w-[227px]" arrow>
        <IconRows
          cell="w-[41px]"
          rows={[
            ["mirror3d", "gizmoMove", "move", "copy", "trim", "arrow"],
            ["align", "gizmoRotate", "rotate", "stretch", "fillet", "arrow"],
            ["erase", "gizmoScale", "scale", "offset", "array", "arrow"],
          ]}
        />
      </Panel>
      <Panel title="Сечение" width="w-[133px]" arrow launcher>
        <BigButton icon="section" lines={["Секущая", "плоскость"]} width="w-full" />
      </Panel>
      <Panel title="Координаты" width="w-[227px]" launcher>
        <IconRows className="pl-[4px]" cell="w-[38px]" rows={[["ucsIcon", "arrow"], ["ucsX", "arrow"], ["ucsObject", "arrow"]]} />
        <div className="pl-[8px]">
          <IconRows cell="w-[39px]" rows={[["ucsNamed", "ucsWorldAxis", "ucsList", "ucsGlobe"], ["ucsPrev", "ucsOrigin", "ucsZ", "ucs3"]]} />
          <div className="mt-[1px]"><Combo icon="frontCube" label="Вид ПСК" options={["Спереди", "Сверху", "Слева"]} width="w-[155px]" /></div>
        </div>
      </Panel>
      <Panel title="Вид" width="w-[252px]" arrow>
        <div className="flex flex-col gap-[5px] pl-[3px] pt-[9px]">
          <Combo icon="conceptual" label="Визуальный стиль" options={["Концептуальный", "Реалистичный"]} width="w-[244px]" />
          <Combo icon="viewFrame" label="Именованный вид" options={["Несохраненный вид"]} width="w-[244px]" />
          <div className="flex items-center gap-[8px] pl-[3px] pt-[2px]">
            <button aria-label="Видовой экран">{icons.viewport}</button>
            <button aria-label="Ещё"><Caret /></button>
          </div>
        </div>
      </Panel>
      <Panel title="Выбор" width="w-[335px]">
        <div className="pl-[2px]"><BigButton icon="select" lines={["Отбор"]} width="w-[64px]" active /></div>
        <BigButton icon="noFilter" lines={["Без фильтра"]} width="w-[146px]" arrow />
        <BigButton icon="gizmo" lines={["Гизмо", "переноса"]} width="w-[112px]" />
        <span className="-ml-[9px] mt-[90px]"><Caret /></span>
      </Panel>
      <div className="flex pt-[1px]">
        <Collapsed icon="layers" title="Слои" />
        <Collapsed icon="groups" title="Группы" />
        <Collapsed icon="view" title="Вид" />
      </div>
    </div>
  );
}

/* ── Drawing tabs ────────────────────────────────────────────────────── */
function Slash() {
  return <svg width="12" height="26" viewBox="0 0 12 26" className="shrink-0" aria-hidden="true"><path d="M11 0L1 26" stroke="#566070" strokeWidth="1.500" /></svg>;
}

function Plus() {
  return <svg width="20" height="20" viewBox="0 0 20 20" aria-hidden="true"><path d="M10 0V20M0 10H20" stroke="#dfe2e6" strokeWidth="2.500" /></svg>;
}

function FileTabs() {
  return (
    <nav className="flex h-[41px] items-end text-[18px] text-[#dfe2e6]">
      <div className="flex h-[37px] items-center">
        <span className="ml-[12px]"><Slash /></span>
        <button className="w-[91px] text-center">Начало</button>
        <div className="relative flex h-full w-[160px] items-center pl-[24px]">
          <svg viewBox="0 0 160 37" preserveAspectRatio="none" className="absolute inset-0 h-full w-full" aria-hidden="true"><path d="M14 0H160L146 37H0Z" fill="#3b4452" /></svg>
          <button className="relative text-[17px] font-bold text-white">Чертеж1*</button>
          <button aria-label="Закрыть вкладку" className="relative ml-auto mr-[18px]">
            <svg width="13" height="13" viewBox="0 0 13 13" aria-hidden="true"><path d="M1 1L12 12M12 1L1 12" stroke="#c3c8ce" strokeWidth="2.200" /></svg>
          </button>
        </div>
        <button aria-label="Новый чертеж" className="ml-[14px]"><Plus /></button>
        <span className="ml-[15px]"><Slash /></span>
      </div>
    </nav>
  );
}

/* ── Model space ─────────────────────────────────────────────────────── */
type Solid = { cx: number; cy: number; r: number; dx: number; dy: number; hollow?: boolean };

const solids: Solid[] = [
  { cx: 301, cy: 833, r: 100, dx: -36, dy: 146 },
  { cx: 514, cy: 812, r: 100, dx: -36, dy: 146 },
  { cx: 949, cy: 639, r: 100, dx: -26, dy: 97, hollow: true },
  { cx: 937, cy: 776, r: 100, dx: -36, dy: 147, hollow: true },
  { cx: 1361, cy: 705, r: 100, dx: -26, dy: 97 },
  { cx: 1153, cy: 822, r: 100, dx: -26, dy: 96, hollow: true },
  { cx: 1859, cy: 559, r: 100, dx: -26, dy: 96, hollow: true },
  { cx: 1631, cy: 1151, r: 50, dx: -38, dy: 147, hollow: true },
  { cx: 1238, cy: 1256, r: 100, dx: -36, dy: 147, hollow: true },
];

const SIDES = 24;

function ring(s: Solid, lower: boolean) {
  return Array.from({ length: SIDES }, (_, i) => {
    const t = (i / SIDES) * Math.PI * 2;
    const x = s.cx + s.r * Math.cos(t) + (lower ? s.dx : 0);
    const y = s.cy + s.r * (0.077 * Math.cos(t) + 0.836 * Math.sin(t)) + (lower ? s.dy : 0);
    return [Math.round(x), Math.round(y)];
  });
}

function hull(points: number[][]) {
  const p = [...points].sort((a, b) => a[0] - b[0] || a[1] - b[1]);
  const cross = (o: number[], a: number[], b: number[]) => (a[0] - o[0]) * (b[1] - o[1]) - (a[1] - o[1]) * (b[0] - o[0]);
  const half = (list: number[][]) => {
    const out: number[][] = [];
    for (const q of list) {
      while (out.length > 1 && cross(out[out.length - 2], out[out.length - 1], q) <= 0) out.pop();
      out.push(q);
    }
    out.pop();
    return out;
  };
  return [...half(p), ...half(p.reverse())];
}

const pts = (p: number[][]) => p.map(q => q.join(",")).join(" ");

function SolidShape({ s, id }: { s: Solid; id: number }) {
  const top = ring(s, false);
  const low = ring(s, true);
  return (
    <g strokeLinejoin="round">
      <defs>
        <linearGradient id={`out${id}`} gradientUnits="userSpaceOnUse" x1={s.cx - s.r + s.dx} x2={s.cx + s.r} y1={s.cy} y2={s.cy + s.r * 0.5}>
          <stop offset=".06" stopColor="#d7d7d2" />
          <stop offset=".28" stopColor="#bdbbd0" />
          <stop offset=".64" stopColor="#7f7fc4" />
          <stop offset=".94" stopColor="#4141b9" />
        </linearGradient>
        <linearGradient id={`in${id}`} gradientUnits="userSpaceOnUse" x1={s.cx - s.r} x2={s.cx + s.r} y1={s.cy} y2={s.cy + s.r * 0.3}>
          <stop offset=".05" stopColor="#4242bb" />
          <stop offset=".4" stopColor="#8684c6" />
          <stop offset=".7" stopColor="#bcbad0" />
          <stop offset="1" stopColor="#d9d9d2" />
        </linearGradient>
        <clipPath id={`clip${id}`}><polygon points={pts(top)} /></clipPath>
      </defs>
      <polygon points={pts(hull([...top, ...low]))} fill={`url(#out${id})`} stroke="#fff" strokeWidth="2" />
      {s.hollow ? (
        <>
          <polygon points={pts(top)} fill={`url(#in${id})`} />
          <g clipPath={`url(#clip${id})`}>
            <polygon points={pts(low)} fill="#212830" />
            <polygon points={pts(low)} fill="url(#grid)" stroke="#fff" strokeWidth="2.500" />
          </g>
          <polygon points={pts(top)} stroke="#fff" strokeWidth="3" fill="none" />
        </>
      ) : (
        <polygon points={pts(top)} fill="#e0e0d4" stroke="#f6f6f4" strokeWidth="2" />
      )}
    </g>
  );
}

function ModelSpace() {
  return (
    <svg viewBox="6 282 2388 950" preserveAspectRatio="xMinYMin slice" className="absolute inset-0 h-full w-full" aria-hidden="true">
      <defs>
        <pattern id="grid" width="83.700" height="69.400" patternUnits="userSpaceOnUse" patternTransform="translate(60.200 756.500) skewY(4.400)">
          <path d="M16.700 0V70M33.500 0V70M50.200 0V70M67 0V70M0 13.900H84M0 27.800H84M0 41.600H84M0 55.500H84" stroke="#262d36" strokeWidth="1" />
          <path d="M.5 0V70M0 .5H84" stroke="#303944" strokeWidth="1.500" />
        </pattern>
      </defs>
      <path d="M0 270H2400V1240H0Z" fill="#212830" />
      <path d="M0 270H2400V1240H0Z" fill="url(#grid)" />
      {solids.map((s, i) => <SolidShape key={i} s={s} id={i} />)}
      <path d="M1030 753L1019 827M1657 1130L1654 1138M1674 1140L1669 1178M1183 1185L1169 1231" stroke="#fff" strokeWidth="1.500" />
      <path d="M1183 1185L1181 1231" stroke="#fff" strokeWidth="1.500" strokeDasharray="8 5" />
      <path d="M425 1115V1118" stroke="#fff" strokeWidth="1.500" />
      <path d="M2023 1110V1160" stroke="#52c452" strokeWidth="1.500" />
      <path d="M2035 1133L2029 1160" stroke="#6f6ff0" strokeWidth="1.500" />
      {/* UCS tripod */}
      <path d="M67 1104V1168" stroke="#46a83c" strokeWidth="7" />
      <path d="M70 1165L144 1172" stroke="#b64d4d" strokeWidth="8" />
      <path d="M69 1168L78 1126" stroke="#3d5f98" strokeWidth="7" />
      <circle cx="78" cy="1125" r="4.500" fill="#7fb0f0" />
      <path d="M64 1081L73 1089L82 1081M73 1089V1098" stroke="#1f7a2c" strokeWidth="1.500" fill="none" />
      <path d="M75 1099H92L75 1118H92" stroke="#2458b8" strokeWidth="1.500" fill="none" />
      <path d="M138 1148L156 1166M156 1148L138 1166" stroke="#9c2840" strokeWidth="1.500" />
    </svg>
  );
}

function ViewCube() {
  return (
    <svg width="200" height="132" viewBox="0 0 200 132" className="block" aria-hidden="true">
      <ellipse cx="97" cy="78" rx="83" ry="40" stroke="#4b525c" strokeWidth="15" fill="none" />
      <path d="M67 4L132 9L134 57L62 52Z" fill="#a9abae" />
      <path d="M63 43L134 46L134 58L122 95L60 90Z" fill="#b3b4b7" />
      <path d="M63 56L134 60" stroke="#6f7277" strokeDasharray="12 6" />
      <path d="M63 30L133 38" stroke="#8e9094" />
      <ellipse cx="113" cy="33" rx="13" ry="7" stroke="#6b6e73" fill="none" />
      <circle cx="97" cy="32" r="6" stroke="#7b7e83" fill="none" />
      <g fontSize="16" fill="#50545a" fontFamily="Open Sans, sans-serif">
        <text x="72" y="38">Сверху</text>
        <text x="64" y="80" fontSize="15" transform="rotate(3 64 80)">Спереди</text>
      </g>
      <g fontSize="16" fill="#b4b7bb" fontWeight="bold" fontFamily="Open Sans, sans-serif">
        <text x="4" y="85">З</text>
        <text x="173" y="97" fontStyle="italic">В</text>
        <text x="81" y="126">С</text>
      </g>
    </svg>
  );
}

function NavBar() {
  return (
    <div className="flex h-[324px] w-[50px] flex-col items-center justify-between rounded-[3px] bg-[#5d6167] py-[6px] text-[#44484e]">
      <span className="mr-[4px] h-[9px] w-[9px] self-end rounded-full border border-current" />
      <button aria-label="Штурвал">
        <Svg size={36}><path d="M12 2H23V12A11 11 0 1 1 12 2Z" stroke="currentColor" /><circle cx="12" cy="12.500" r="5.500" stroke="currentColor" strokeWidth="2" /></Svg>
      </button>
      <Caret w={6} fill="#44484e" />
      <button aria-label="Панорамирование"><Hand size={36} strokeWidth={1.400} /></button>
      <button aria-label="Показать до границ">
        <Svg size={36}><path d="M2 2L14 14M14 2L2 14M2 6V2H6M10 2H14V6M2 10V14H6" stroke="currentColor" strokeWidth="1.500" /><circle cx="16" cy="16" r="4.500" stroke="currentColor" strokeWidth="1.500" /><path d="M19 19L23 23" stroke="currentColor" strokeWidth="2.500" /></Svg>
      </button>
      <Caret w={6} fill="#44484e" />
      <button aria-label="Орбита">
        <Svg size={36}><ellipse cx="12" cy="13" rx="11" ry="4" stroke="currentColor" strokeWidth="1.500" /><path d="M10 22V6H8L12 1L16 6H14V22Z" stroke="currentColor" strokeWidth="1.300" fill="#5d6167" /></Svg>
      </button>
      <Caret w={6} fill="#44484e" />
      <button aria-label="ShowMotion">
        <Svg size={36}><path d="M1 2H7V8H1ZM9 2H15V8H9ZM17 2H23V8H17ZM1 10H17V22H1Z" stroke="currentColor" strokeWidth="1.300" /><path d="M6 13L12 16L6 19Z" fill="currentColor" /></Svg>
      </button>
      <span className="mr-[4px] h-[8px] w-[8px] self-end rounded-full border border-current" />
    </div>
  );
}

function CommandLine() {
  return (
    <div className="absolute bottom-[2px] left-[479px] right-[480px] font-['Liberation_Mono',monospace] text-[19px]">
      <ul className="mb-[7px] ml-[93px] flex flex-col items-start gap-[7px] text-[#414a55]">
        {["Команда:", "Команда: Задайте противоположный угол или [Линия/РМн-угол/СМн-угол]:", "Команда: *Прервано*"].map(l => (
          <li key={l} className="whitespace-nowrap bg-[#262d36]/70 px-[4px] leading-[24px]">{l}</li>
        ))}
      </ul>
      <div className="flex h-[40px] items-center">
        <div className="flex h-full w-[88px] shrink-0 items-center bg-[#262d38]/80 pl-[3px]">
          <svg width="8" height="28" viewBox="0 0 8 28" aria-hidden="true"><path d="M1.500 0V28M6.500 0V28" stroke="#c3c7cc" strokeWidth="2.500" strokeDasharray="2.500 2.500" /></svg>
          <button aria-label="Закрыть командную строку" className="ml-[10px]">
            <svg width="13" height="13" viewBox="0 0 13 13" aria-hidden="true"><path d="M1 1L12 12M12 1L1 12" stroke="#d0d3d7" strokeWidth="2.400" /></svg>
          </button>
          <button aria-label="Адаптация" className="ml-[20px]"><Wrench size={24} color="#c9ccd0" fill="#c9ccd0" strokeWidth={1} /></button>
        </div>
        <div className="flex h-full min-w-0 flex-1 items-center rounded-[2px] bg-white/[0.71] pl-[6px] pr-[8px]">
          <button aria-label="Последние команды" className="flex items-center gap-[3px]">
            <Terminal size={20} color="#555a60" className="border border-t-[4px] border-[#555a60]" /><Caret w={11} fill="#444" />
          </button>
          <input aria-label="Командная строка" placeholder="Введите команду" className="ml-[13px] min-w-0 flex-1 bg-transparent italic placeholder:text-[#5d6166]" />
          <button aria-label="Журнал команд"><Caret up w={11} fill="#555" /></button>
        </div>
      </div>
    </div>
  );
}

function Viewport() {
  return (
    <main className="relative min-h-[600px] flex-1 overflow-hidden border-y-[6px] border-[#3b4452] bg-[#212830]">
      <ModelSpace />
      <div className="absolute left-[4px] top-[7px] whitespace-nowrap text-[17px] leading-[24px] text-[#eceef0]">[−][Пользовательский вид][Концептуальный]</div>
      <div className="absolute right-[17px] top-[13px] flex items-end gap-[15px]">
        <button aria-label="Свернуть вид" className="mb-[1px] h-[5px] w-[16px] bg-white" />
        <button aria-label="Восстановить вид"><Svg size={17} box={16}><path d="M5 4V1H15V11H12M1 5H11V15H1Z" stroke="#fff" strokeWidth="2" /></Svg></button>
        <button aria-label="Закрыть вид"><Svg size={15} box={14}><path d="M1 1L13 13M13 1L1 13" stroke="#fff" strokeWidth="2.800" /></Svg></button>
      </div>
      <div className="absolute right-[8px] top-[93px]"><ViewCube /></div>
      <button className="absolute right-[55px] top-[261px] flex h-[25px] w-[112px] items-center justify-between rounded-[6px] border border-[#70747b] bg-[#9a9da3] px-[5px] text-[14px] font-bold text-[#696d73]">
        Без имени<Caret w={10} fill="#b4b7bc" />
      </button>
      <div className="absolute right-[5px] top-[325px]"><NavBar /></div>
      <CommandLine />
    </main>
  );
}

/* ── Layout tabs and status bar ──────────────────────────────────────── */
function StatusBar() {
  return (
    <div className="flex h-[48px] items-start text-[18px] text-[#dfe2e6]">
      <div className="flex h-[37px] items-center">
        <div className="relative flex h-full w-[128px] items-center justify-center pr-[4px]">
          <svg viewBox="0 0 128 37" preserveAspectRatio="none" className="absolute inset-0 h-full w-full" aria-hidden="true"><path d="M26 0H136L122 37H12Z" fill="#3b4452" /></svg>
          <button className="relative pl-[22px] text-[17px] font-bold text-white">Модель</button>
        </div>
        <svg width="12" height="37" viewBox="0 0 12 37" aria-hidden="true"><path d="M0 0H8L0 22Z" fill="#3b4452" /></svg>
        <button className="ml-[8px]">Лист1</button>
        <span className="ml-[12px]"><Slash /></span>
        <button className="ml-[12px]">Лист2</button>
        <span className="ml-[12px]"><Slash /></span>
        <button aria-label="Новый лист" className="ml-[15px]"><Plus /></button>
        <span className="ml-[15px]"><Slash /></span>
      </div>
      <div className="ml-auto mr-[486px] flex h-[37px] items-center gap-[4px] pt-[3px]">
        <button className="h-[37px] w-[90px] bg-[#3b4452] text-white">МОДЕЛЬ</button>
        <div className="flex h-[37px] items-center bg-[#3b4452]">
          <button aria-label="Сетка" className="flex h-full w-[36px] items-center justify-center bg-[#5b8fc6]">
            <Svg><path d="M6 1V23M12 1V23M18 1V23M1 6H23M1 12H23M1 18H23" stroke="#fff" strokeWidth="1.300" /></Svg>
          </button>
          <button aria-label="Шаг" className="flex w-[38px] justify-center">
            <Svg size={20}><path d="M4 1V23M12 1V23M20 1V23" stroke="#dfe2e6" strokeWidth="4" strokeDasharray="4 5" /></Svg>
          </button>
          <button aria-label="Параметры шага" className="flex w-[24px] justify-center"><Caret w={11} /></button>
        </div>
        <div className="flex h-[37px] items-center bg-[#3b4452]">
          <button aria-label="Динамический ввод" className="flex h-full w-[36px] items-center justify-center bg-[#5b8fc6]">
            <Svg><path d="M6 3V13M1 8H11" stroke="#fff" strokeWidth="1.500" /><path d="M8 15H23V21H8Z" fill="#fff" /></Svg>
          </button>
          <button aria-label="Орто" className="flex w-[42px] justify-center"><Svg><path d="M3 2V21H24M3 14H10V21" stroke="#cfd3d8" strokeWidth="1.500" /></Svg></button>
          <button aria-label="Полярное отслеживание" className="flex w-[34px] justify-center"><Svg><circle cx="11" cy="13" r="9" stroke="#cfd3d8" strokeWidth="1.500" /><path d="M11 13L18 2M11 13H24" stroke="#cfd3d8" strokeWidth="1.500" /></Svg></button>
          <button aria-label="Углы" className="flex w-[28px] justify-center"><Caret w={11} /></button>
          <button aria-label="Изометрия" className="flex w-[36px] justify-center"><Svg><path d="M12 0V24" stroke="#5ea86c" strokeWidth="1.500" /><path d="M3 3L21 22" stroke="#b05a66" strokeWidth="1.500" /><circle cx="12" cy="12" r="2" stroke="#ddd" /></Svg></button>
          <button aria-label="Плоскости" className="flex w-[26px] justify-center"><Caret w={11} /></button>
        </div>
        <div className="-ml-[3px] flex h-[37px] items-center bg-[#3b4452]">
          <button aria-label="Отслеживание" className="flex w-[38px] justify-center"><Svg><path d="M19 2L2 21H24" stroke="#cfd3d8" strokeWidth="1.500" /><circle cx="9" cy="13" r="2" fill="#ddd" /></Svg></button>
          <button aria-label="Привязка" className="flex h-full w-[36px] items-center justify-center bg-[#5b8fc6]"><Svg><path d="M7 4H22V22H3V8" stroke="#fff" strokeWidth="1.600" /><path d="M1 1H7V7H1Z" stroke="#fff" strokeWidth="1.500" /></Svg></button>
          <button aria-label="Режимы привязки" className="flex w-[28px] justify-center"><Caret w={11} /></button>
        </div>
      </div>
    </div>
  );
}

/* ── Windows taskbar ─────────────────────────────────────────────────── */
type App = { name: string; icon: ReactNode; bar?: "run" | "active" };

const apps: App[] = [
  { name: "Яндекс Браузер", bar: "run", icon: <Svg size={38}><circle cx="12" cy="12" r="12" fill="#fff" /><path d="M6 5L12 13V20" stroke="#f4432c" strokeWidth="3" /><path d="M18 5L12 13" stroke="#f85aa8" strokeWidth="3" /></Svg> },
  { name: "WhatsApp, 1", icon: <span className="relative"><FaWhatsapp size={40} color="#25d366" /><span className="absolute -bottom-[6px] -right-[12px] flex h-[26px] w-[26px] items-center justify-center rounded-full border border-[#8a8a8a] bg-[#333] text-[16px] leading-none text-white">1</span></span> },
  { name: "VK", icon: <span className="flex h-[38px] w-[38px] items-center justify-center rounded-[9px] bg-[#2787f5]"><FaVk size={26} color="#fff" /></span> },
  { name: "Gmail", icon: <Svg size={38}><path d="M0 5V21H5V9Z" fill="#4285f4" /><path d="M24 5V21H19V9Z" fill="#34a853" /><path d="M19 5L22 3Q24 4 24 6V9L19 12Z" fill="#fbbc04" /><path d="M5 5L12 11L19 5V11L12 17L0 8V6Q0 3 3 3.500Z" fill="#ea4335" /></Svg> },
  { name: "S", icon: <span className="flex h-[38px] w-[38px] items-center justify-center rounded-[9px] bg-[linear-gradient(to_bottom_left,#14083e_27%,#ee1540_27%)] text-[32px] font-black leading-none text-white">S</span> },
  { name: "WhatsApp", icon: <Svg size={38}><path d="M0 24L2 17A12 12 0 1 1 7 22Z" fill="#fff" /><path d="M2.500 21.500L4 17A10 10 0 1 1 8 20.500Z" fill="#34b54a" /><path d="M8 6Q5 9 8 13Q12 18 16 18Q20 16 17 14L15 13L13 15Q10 13 9.500 11L11 9L9 6Z" fill="#fff" /></Svg> },
  { name: "R", icon: <span className="flex h-[38px] w-[38px] items-center justify-center rounded-[9px] bg-[linear-gradient(to_bottom_left,#ee1540_30%,#14083e_30%)] text-[30px] font-black leading-none text-white">R</span> },
  { name: "Дом", icon: <Svg size={38}><path d="M2 13L9 5L16 12V21H5V14Z" fill="#bfe6b4" /><path d="M9 4L17 3L23 10L22 18L16 21V12Z" fill="#2f8c33" /><path d="M0 14L9 4L17 13" stroke="#14611c" strokeWidth="2" /><path d="M11 15H14V21H11Z" fill="#1d4a20" /></Svg> },
  { name: "Плеер", icon: <Svg size={38}><circle cx="12" cy="12" r="12" fill="#fdc800" /><path d="M8 6L19 12L8 18Z" fill="#000" /></Svg> },
  { name: "Capsule", icon: <Svg size={38}><path d="M0 0H24V24H0Z" fill="#000" /><path d="M7 3Q3 5 6 9Q8 12 14 14Q21 17 18 20Q14 23 9 20M9 3Q16 1 19 5Q20 9 16 9M7 12Q3 17 6 20Q10 22 15 17" stroke="#ddd" /><ellipse cx="12" cy="12" rx="4" ry="7.500" stroke="#ddd" transform="rotate(20 12 12)" /></Svg> },
  { name: "Инженерный калькулятор", icon: <Svg size={38}><path d="M12 0L24 7V24H0V7Z" fill="#31496a" /><path d="M12 0V24M0 14H24M4 10H8M6 8V12M15 10H20M4 17L8 21M8 17L4 21M15 19H20" stroke="#1d2836" strokeWidth="1.300" /></Svg> },
  { name: "Калькулятор", icon: <Svg size={38}><rect width="24" height="24" rx="4" fill="#fb9a1c" /><path d="M12 12H24V20Q24 24 20 24H12Z" fill="#dcdcdc" /><path d="M12 0V24M0 12H24" stroke="#fbb75a" /><path d="M6 4V8M4 6H8M16 6H20M4.500 16L8 20M8 16L4.500 20" stroke="#fff" strokeWidth="1.300" /><path d="M16 17H20M16 19H20" stroke="#666" /></Svg> },
  { name: "Смета", icon: <Svg size={38}><path d="M0 0H24V24H0Z" fill="#fff" /><path d="M1 5L14 3L13 15L6 21L3 8Z" fill="#2c4a7c" /><path d="M4 9H12M5 12H12M6 15H11M7 7L9 18" stroke="#fff" strokeWidth=".9" /><path d="M1 8L13 3" stroke="#2c4a7c" strokeWidth="1.500" /><path d="M23 6Q16 5 16 8Q22 11 21 14Q17 16 13 14" stroke="#2c4a7c" strokeWidth="2.200" /></Svg> },
  { name: "WPS Office", icon: <Svg size={38}><circle cx="12" cy="12" r="12" fill="#f5411c" /><path d="M5 7H9L11 14L12 10M5 7L9 17L12 12L15 17L19 7H12" stroke="#fff" strokeWidth="1.700" /></Svg> },
  { name: "AutoCAD", bar: "active", icon: <span className="flex h-[38px] w-[34px] flex-col items-center rounded-[3px] border-l-[4px] border-[#f2638a] bg-[#df0d4c] text-[18px] font-bold leading-[26px] text-white">A<span className="w-full bg-[#7d0a2b] text-center text-[9px] leading-[12px]">CAD</span></span> },
  { name: "Проводник", bar: "run", icon: <Svg size={38}><path d="M1 3H9L11 5H22V8H1Z" fill="#e0a21d" /><path d="M1 6H23V21H1Z" fill="#fad266" /><path d="M5 13H19V21H15V17H9V21H5Z" fill="#3c8fd6" /></Svg> },
  { name: "Telegram", bar: "run", icon: <Svg size={40}><circle cx="11" cy="11.500" r="11.500" fill="#2ea5e0" /><path d="M3 12L16 6L13 17L8 13Z" fill="#fff" /><circle cx="17" cy="17" r="7" fill="#f5421f" /><path d="M17 17Q15 14 13.500 17Q15 20 17 17Q19 14 20.500 17Q19 20 17 17Z" stroke="#fff" strokeWidth="1.300" /></Svg> },
];

const tray: [string, string, ReactNode][] = [
  ["Скрытые значки", "w-[40px]", <ChevronUp size={28} color="#fff" strokeWidth={1.500} />],
  ["Батарея", "w-[37px]", <Svg size={25}><path d="M1 6H21V18H1ZM21 9H23V15H21" stroke="#fff" strokeWidth="1.500" /><path d="M3 8H8V16H3Z" fill="#fff" /></Svg>],
  ["Громкость", "w-[38px]", <Volume2 size={25} color="#fff" strokeWidth={1.400} />],
  ["Сеть", "w-[38px]", <Svg size={25}><path d="M2 21Q3 5 21 3M8 22Q8 11 21 9M13 22Q14 16 21 15" stroke="#d0d0d0" strokeWidth="1.500" /><circle cx="19" cy="20" r="2" fill="#fff" /></Svg>],
  ["OneDrive", "w-[36px]", <Svg size={26}><path d="M6 19A6 6 0 0 1 6 9A6 6 0 0 1 17 8L10 19Z" fill="#b9b9b9" /><path d="M7 19A5 5 0 0 1 12 12A5 5 0 0 1 19 12A4 4 0 0 1 20 19Z" fill="#fff" /></Svg>],
  ["Микрофон", "w-[38px]", <Mic size={27} color="#fff" fill="#fff" strokeWidth={1.400} />],
  ["Рукописный ввод", "w-[50px]", <Svg size={27}><path d="M8 17L18 3Q22 2 21 6L11 19L7 20ZM2 15Q6 10 8 13Q2 20 4 22Q8 22 10 19Q12 15 16 15Q20 16 16 20" stroke="#fff" strokeWidth="1.300" /></Svg>],
];

function Taskbar() {
  return (
    <footer className="flex h-[62px] items-stretch bg-[linear-gradient(90deg,#2a1f22_0%,#2c2124_35%,#25301f_50%,#2a2622_60%,#2c1d22_75%,#25271c_87%,#2b1a1f_100%)] text-[17px] text-white">
      <button aria-label="Пуск" className="flex w-[75px] items-center justify-center"><FaWindows size={26} color="#fff" /></button>
      <label className="flex w-[537px] items-center gap-[17px] border border-[#666] bg-[#333] pl-[17px]">
        <Search size={27} color="#f0f0f0" strokeWidth={1.500} className="-scale-x-100" />
        <input aria-label="Поиск в Windows" placeholder="Чтобы начать поиск, введите здесь запрос" className="min-w-0 flex-1 bg-transparent text-[22px] placeholder:text-[#d2d2d2]" />
      </label>
      <div className="ml-[4px] flex">
        {apps.map(a => (
          <button
            key={a.name}
            aria-label={a.name}
            className={`flex w-[74px] items-center justify-center ${a.bar === "active" ? "bg-[#544a4d]" : ""} ${a.bar ? "border-b-[4px] border-[#b9b5b6] pt-[4px]" : ""}`}
          >
            {a.icon}
          </button>
        ))}
      </div>
      <div className="ml-auto flex items-stretch">
        {tray.map(([label, width, icon]) => (
          <button key={label} aria-label={label} className={`${width} flex items-center justify-center`}>{icon}</button>
        ))}
        <button className="w-[56px] bg-[#403639]">РУС</button>
        <time className="flex w-[106px] flex-col items-center justify-center leading-[28px]"><span>14:45</span><span>08.06.2025</span></time>
        <button aria-label="Уведомления" className="relative flex w-[84px] items-center justify-center pb-[4px] pr-[16px]">
          <Svg size={28}><path d="M1 1H22V19H10L5 23V19H1Z" fill="#fff" /><path d="M5 6H18M5 10H18M5 14H14" stroke="#2b1a1f" strokeWidth="1.500" /></Svg>
          <span className="absolute bottom-[4px] right-[25px] flex h-[28px] w-[28px] items-center justify-center rounded-full border border-[#888] bg-[#444] text-[16px] font-bold">16</span>
        </button>
      </div>
    </footer>
  );
}

export default function App() {
  return (
    <div className="relative flex min-h-screen flex-col bg-[#222933] font-['Open_Sans',sans-serif] antialiased">
      <div className="flex flex-1 flex-col border-2 border-[#1787b6] px-[4px]">
        <TitleBar />
        <RibbonTabs />
        <Ribbon />
        <FileTabs />
        <Viewport />
        <StatusBar />
      </div>
      <Taskbar />
      <div role="tooltip" className="absolute bottom-[64px] right-[1px] w-[480px] overflow-hidden border border-[#8a8a8a] bg-white px-[6px] pb-[2px] pt-px text-[18px] leading-[25px] text-[#5a5a5a]">
        <p>Русский</p>
        <p>Русская клавиатура</p>
        <br />
        <p className="whitespace-nowrap">Для переключения методов ввода нажмите клавиши</p>
        <p>WINDOWS+ПРОБЕЛ.</p>
      </div>
    </div>
  );
}
